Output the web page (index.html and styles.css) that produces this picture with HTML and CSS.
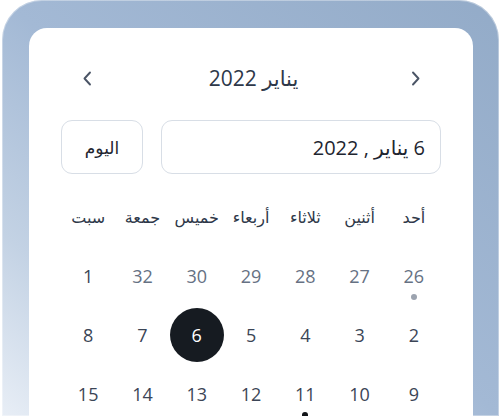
FILE: index.html
```html
<!DOCTYPE html>
<html lang="ar">
<head>
<meta charset="utf-8">
<title>Calendar</title>
<link rel="stylesheet" href="styles.css">
</head>
<body>
<div class="frame">
  <div class="card">
    <div class="header">
      <button class="nav" aria-label="previous">
        <svg width="10" height="15" viewBox="0 0 10 15"><path d="M8 1.5 L2.5 7.5 L8 13.5" fill="none" stroke="#4b5566" stroke-width="1.9" stroke-linecap="round" stroke-linejoin="round"/></svg>
      </button>
      <div class="title" dir="rtl">يناير 2022</div>
      <button class="nav" aria-label="next">
        <svg width="10" height="15" viewBox="0 0 10 15"><path d="M2 1.5 L7.5 7.5 L2 13.5" fill="none" stroke="#4b5566" stroke-width="1.9" stroke-linecap="round" stroke-linejoin="round"/></svg>
      </button>
    </div>
    <div class="inputs" dir="rtl">
      <div class="date-field">6 يناير , 2022</div>
      <button class="today">اليوم</button>
    </div>
    <div class="grid" dir="rtl">
      <div class="dow">أحد</div>
      <div class="dow">أثنين</div>
      <div class="dow">ثلاثاء</div>
      <div class="dow">أربعاء</div>
      <div class="dow">خميس</div>
      <div class="dow">جمعة</div>
      <div class="dow">سبت</div>

      <div class="day muted"><span>26</span><i class="dot grey"></i></div>
      <div class="day muted"><span>27</span></div>
      <div class="day muted"><span>28</span></div>
      <div class="day muted"><span>29</span></div>
      <div class="day muted"><span>30</span></div>
      <div class="day muted"><span>32</span></div>
      <div class="day"><span>1</span></div>

      <div class="day"><span>2</span></div>
      <div class="day"><span>3</span></div>
      <div class="day"><span>4</span></div>
      <div class="day"><span>5</span></div>
      <div class="day selected"><span>6</span></div>
      <div class="day"><span>7</span></div>
      <div class="day"><span>8</span></div>

      <div class="day"><span>9</span></div>
      <div class="day"><span>10</span></div>
      <div class="day"><span>11</span><i class="dot dark"></i></div>
      <div class="day"><span>12</span></div>
      <div class="day"><span>13</span></div>
      <div class="day"><span>14</span></div>
      <div class="day"><span>15</span></div>
    </div>
  </div>
</div>
</body>
</html>
```

FILE: styles.css
```css
html, body {
  margin: 0;
  padding: 0;
  height: 416px;
  overflow: hidden;
  background: #ffffff;
}

body {
  font-family: "Open Sans", "Noto Sans", "DejaVu Sans", sans-serif;
}

.frame {
  margin-left: 2px;
  width: 497px;
  height: 416px;
  box-sizing: border-box;
  padding: 28px 26px 0 27px;
  border-radius: 40px 40px 0 0;
  background: linear-gradient(to top right, #e8eef6 0%, #c3d2e4 22%, #a3b9d5 50%, #93abc8 100%);
  box-shadow: inset 0 0 0 1px rgba(255, 255, 255, 0.35);
  overflow: hidden;
}

.card {
  background: #ffffff;
  border-radius: 18px 18px 0 0;
  height: 388px;
  padding: 30px 32px 0;
  box-sizing: border-box;
  overflow: hidden;
}

.header {
  display: flex;
  align-items: center;
  justify-content: space-between;
  height: 40px;
  padding: 0 19px 0 20px;
}

.nav {
  border: 0;
  background: none;
  padding: 0;
  width: 12px;
  height: 16px;
  display: flex;
  align-items: center;
  justify-content: center;
}

.title {
  font-size: 21px;
  color: #2e3849;
  padding-left: 4px;
}

.inputs {
  display: flex;
  gap: 18px;
  margin-top: 22px;
  height: 54px;
}

.date-field {
  flex: 1;
  display: flex;
  align-items: center;
  border: 1px solid #d8dee6;
  border-radius: 11px;
  padding: 0 15px;
  font-size: 20px;
  color: #1e2530;
}

.today {
  width: 82px;
  border: 1px solid #d8dee6;
  border-radius: 11px;
  background: #ffffff;
  font-family: inherit;
  font-size: 17px;
  color: #1e2530;
  padding: 0;
}

.grid {
  display: grid;
  grid-template-columns: repeat(7, 1fr);
  grid-auto-rows: 59px;
  margin-top: 13px;
}

.dow {
  display: flex;
  align-items: center;
  justify-content: center;
  font-size: 16px;
  color: #2e3849;
}

.day {
  position: relative;
  display: flex;
  align-items: center;
  justify-content: center;
  font-size: 18px;
  color: #3b4556;
}

.day span {
  width: 54px;
  height: 54px;
  border-radius: 50%;
  display: flex;
  align-items: center;
  justify-content: center;
}

.day.muted {
  color: #667183;
}

.day.selected span {
  background: #161b21;
  color: #ffffff;
}

.dot {
  position: absolute;
  left: 50%;
  top: 50%;
  width: 6px;
  height: 6px;
  margin: 18px 0 0 -3px;
  border-radius: 50%;
}

.dot.grey {
  background: #9ca3af;
}

.dot.dark {
  background: #111418;
}
```
